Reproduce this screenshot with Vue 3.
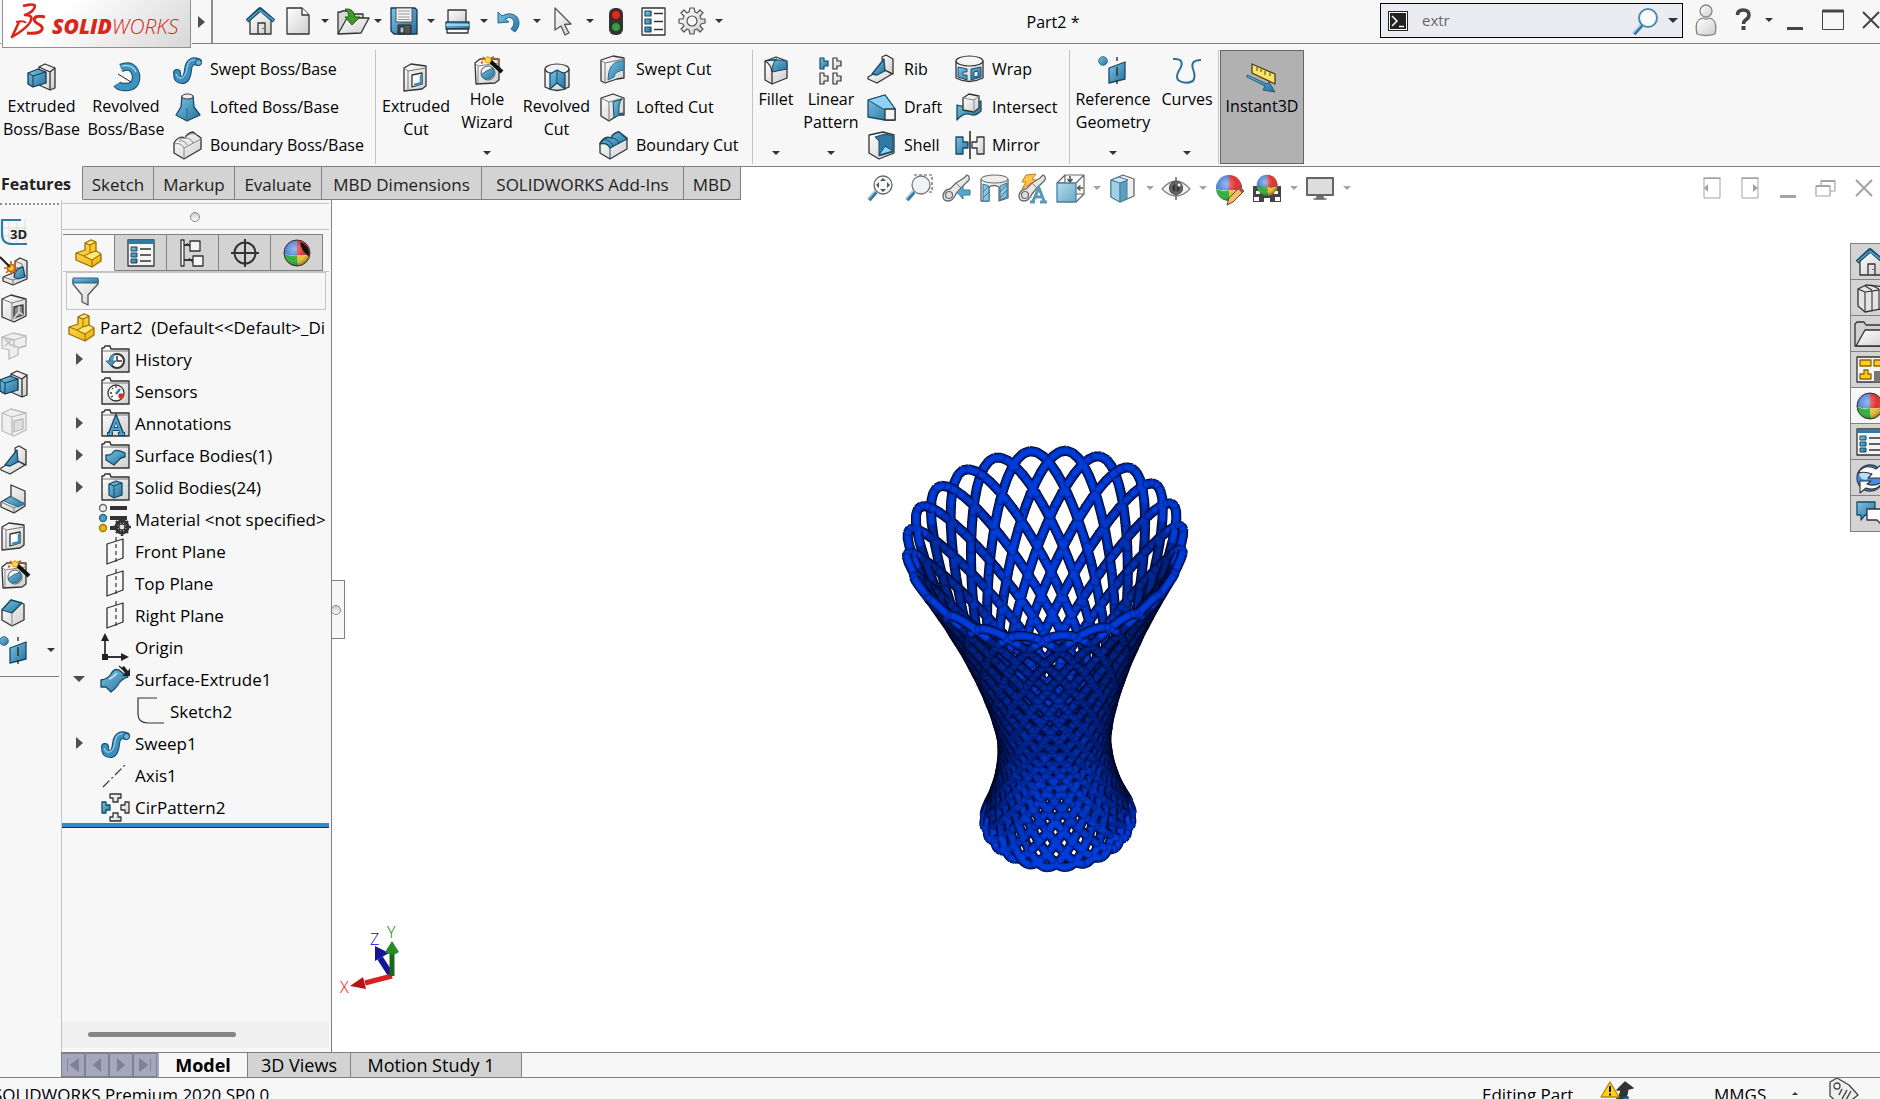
<script setup>
import { ref } from 'vue'

const K = '#333'
const B = 'url(#g-blue)'
const G = 'url(#g-grey)'
const Y = 'url(#g-gold)'
const p = (d, f = 'none', s = K, w = 1.3) =>
  `<path d="${d}" fill="${f}" stroke="${s}" stroke-width="${w}" stroke-linejoin="round"/>`
const c = (x, y, r, f = 'none', s = K, w = 1.3) =>
  `<circle cx="${x}" cy="${y}" r="${r}" fill="${f}" stroke="${s}" stroke-width="${w}"/>`

const ball =
  '<path d="M14 14L14 1A13 13 0 0 0 1 15Q8 17 14 16Z" fill="#4a7fd6"/>' +
  '<path d="M14 1A13 13 0 0 1 27 15Q20 17 14 16Z" fill="#dc3030"/>' +
  '<path d="M1 15Q8 18 14 16L15 27A13 13 0 0 1 1 15Z" fill="#2fae3a"/>' +
  '<path d="M27 15Q20 18 14 16L15 27A13 13 0 0 0 27 15Z" fill="#e9bf2c"/>' +
  '<circle cx="14" cy="14" r="13" fill="url(#g-shine)"/>'
const folder = p('M1 27V3H3L4 1H9L10 4H28V27Z', G, K, 1.4) + p('M1 6H28', 'none', '#777', 1)
const slab = p('M11 4L17 1L27 5V25L22 27L11 22Z', G) + p('M11 4L22 9L27 5M22 9V27')
const bluebox = p('M0 10L10 6L18 9V20L5 24L0 21Z', B, '#0d3b56') + p('M0 10L5 13L18 9M5 13V24', 'none', '#0d3b56', 1)
const wizardBox =
  p('M2 7L7 3H26V24L22 27L3 28Z', G) + p('M2 7L5 10L26 7M5 10V27', 'none', '#888', 1) +
  c(15, 17, 7, '#f4f4f4', '#555', 1) + p('M8 19Q12 15 20 12Q23 18 18 22Q11 25 8 19Z', B, '#2b6f95', 1) +
  p('M17 5L29 16', 'none', '#111', 4) + p('M9 4L11 1M14 6L12 3M14 1L17 3L21 1M24 3L26 5M10 6L8 7', 'none', '#c8641a', 2) +
  c(15, 4, 3, '#ffd83a', '#e8a21a', 1)
const sweep =
  '<path d="M4 18Q4 25 9 25Q14 25 15 15Q16 4 25 7" fill="none" stroke="#164a68" stroke-width="8" stroke-linecap="round"/>' +
  '<path d="M4 18Q4 25 9 25Q14 25 15 15Q16 4 25 7" fill="none" stroke="#3a8fbd" stroke-width="6" stroke-linecap="round"/>' +
  '<path d="M3 19Q5 24 8 23Q13 22 14 13Q15 4 22 5" fill="none" stroke="#85c4e4" stroke-width="1.5"/>' +
  c(25.5, 7.5, 3, '#6ab5da', '#164a68', 1)
const rib = p('M1 22L8 18L18 15L25 19L10 28L1 24Z', G) + p('M15 2L19 0L26 4V19L16 14Z', G) + p('M5 19L17 4L18 16L10 20Z', B, '#164a68')
const plane = p('M6 7L22 2V21L6 27Z', 'none') + p('M15 0V28', 'none', K, 1.2).replace('/>', ' stroke-dasharray="4 3"/>')
const refgeo = c(4, 5, 4.3, B, '#2b6f95', 1) + p('M10 12L26 6V23L10 27Z', B, '#164a68') + p('M18 1V5M18 11V20M18 24V28', 'none', '#222', 1.3)
const cutbox = p('M2 5L9 1L24 3V23L20 26L2 28Z', G) + p('M2 5L6 8L24 5M6 8V28', 'none', '#777', 1) + p('M10 12L20 10V21L10 24Z', '#fff', K) + p('M12 22L19 20V12', 'none', '#3a8fbd', 2.5)
const chamfer = p('M2 12L11 2L24 6V22L12 28L2 22Z', G) + p('M2 12L11 2L22 5L12 15Z', B, '#164a68') + p('M12 15V28', 'none', '#888', 1)
const partIcon =
  p('M1 14L10 11V4L16 1L21 3V12L26 15V22L17 28L1 21Z', Y, '#9a6c00') +
  p('M1 14L9 17L17 21L26 15M17 21V28M10 4L15 6L21 3M15 6V14L21 12', 'none', '#9a6c00', 1) +
  p('M10 4L16 1L21 3L15 6ZM9 17L15 14L21 12L26 15L17 21Z', '#ffe77a', '#9a6c00', 1)
const tee = (x, y, f, m = 1) => `<g transform="translate(${x} ${y}) scale(${m} 1)">` + p('M0 0H4V3H8V8H4V11H0Z', f, f === B ? '#164a68' : K, 1.2) + '</g>'
const lensHandle = p('M3 26L10 18', 'none', '#33789e', 4) + p('M2 25L9 17', 'none', '#9ccbe3', 1.5)
const scope = p('M1 22Q2 15 8 15L14 9L22 4L25 1Q28 2 27 6L19 14L14 20Q11 27 6 27Q1 27 1 22Z', G, '#666') + c(7, 21, 3.5, '#ddd', '#666', 1.2) + p('M14 9L19 14', 'none', '#777', 1)
const houseShape = p('M4 13V27H25V13L14.500 4Z', G) + p('M1 14L14 2L28 14', 'none', '#164a68', 4) + p('M1.500 13.500L14 3L27.500 13.500', 'none', '#4f9fc9', 1.6) + p('M12 27V16H19V27M17 21V22', 'none')
const propIcon = p('M1 1H27V27H1Z', '#f5f5f5') + '<rect x="1" y="1" width="26" height="4" fill="#2f7ba3"/>' + p('M4 8H10V12H4ZM4 14H10V18H4ZM4 20H10V24H4Z', B, '#164a68', 1) + p('M13 10H24M13 16H24M13 22H24', 'none')

const icons = {
  home: houseShape,
  newdoc: p('M3 1H18L25 8V27H3Z', G) + p('M18 1V8H25', '#fff'),
  open: p('M1 27V5H4L5 4H12L14 7H26V12', '#d7d7d7') + p('M1 27L10 11H32L24 26Z', G) + p('M8 2Q17 1 18 10H23L15 18L8 10H12Q12 5 8 2Z', '#3f9b23', '#1d5c0d', 1),
  save: p('M1 1H25L27 3V27H4L1 24Z', B, '#123a50') + p('M6 1H22V15H6Z', '#f4f4f4', '#555', 1) + p('M8 4H20M8 7H20M8 10H20M8 12.500H20', 'none', '#999', 1) + p('M8 18H21V27H8Z', '#555', '#222', 1) + p('M10 20H14V26H10Z', '#9ccbe3', '#222', 1),
  print: p('M5 3H23V16H5Z', G) + p('M3 15H26V22H3Z', B, '#164a68') + p('M3 18H26', 'none', '#b5e0f2', 1.5) + p('M4 22H25V26H4Z', '#fff'),
  undo: p('M2 5L2 16L13 15L9 12Q16 8 18 15Q18 19 15 22L19 25Q26 17 21 10Q15 4 6 9Z', B, '#24688d', 1),
  cursor: p('M6 1L22 17L15.500 17.500L20 26L16 28L12 19L6 23Z', G, '#555'),
  traffic: '<rect x="7" y="1" width="14" height="27" rx="6" fill="#333"/>' + c(14, 8, 4.5, '#d92b1e', '#7a0d06', 1) + c(14, 20, 4.5, '#3f9a45', '#11461a', 1),
  options: p('M2 1H25V28H2Z', '#fff') + p('M5 4H11V9H5ZM5 12H11V17H5ZM5 20H11V25H5Z', B, '#164a68', 1.2) + p('M14 6.500H23M14 14.500H23M14 22.500H23', 'none'),
  gear: p('M12 1H16L17 5L19 6L22 3L25 6L22 9L23 12L27 12V16L23 17L22 19L25 22L22 25L19 22L16.500 23L16 27H12L11 23L9 22L6 25L3 22L6 19L5 17L1 16V12L5 12L6 9L3 6L6 3L9 6L11 5Z', G, '#555', 1.2) + c(14, 14, 5, '#f7f7f7', '#555', 1.2),
  user: c(14, 5, 6, G, '#888') + p('M5 28Q2 15 10 12Q14 14 18 12Q26 15 23 28Q14 31 5 28Z', G, '#888'),
  help: '<path d="M8.500 9Q8.500 4 14 4Q20 4 20 9Q20 12 16.500 14Q14.500 15.500 14.500 18" fill="none" stroke="#444" stroke-width="3.500"/><rect x="12.500" y="20" width="4" height="4" fill="#444"/>',
  min: '<rect x="6" y="21" width="16" height="3" fill="#444"/>',
  max: p('M3.500 4H24.500V23.500H3.500Z', 'none', '#444', 1) + '<rect x="3" y="4" width="22" height="2.500" fill="#444"/>',
  close: p('M6 6L22 22M22 6L6 22', 'none', '#444', 2),
  extrude: slab + bluebox,
  revolve: '<path d="M9 5Q21 0 24 12Q25 25 12 24Q7 24 5 21" fill="none" stroke="#164a68" stroke-width="8.500"/><path d="M9 5Q21 0 24 12Q25 25 12 24Q7 24 5 21" fill="none" stroke="#3f93c0" stroke-width="6.500"/><path d="M10 3Q20 1 24 9" fill="none" stroke="#9ed3ec" stroke-width="1.500"/>' + p('M6 11L19 19', 'none', '#222', 1),
  sweep,
  loft: p('M9 3H20L21 14L27 22L14 28L3 22L8 14Z', B, '#164a68') + p('M14 15V28', 'none', '#2b6f95', 1) + '<ellipse cx="14.500" cy="3.500" rx="5.500" ry="2.500" fill="#eee" stroke="#333"/>',
  boundary: p('M1 12Q6 4 12 7Q14 2 20 1L28 7V18L11 28L1 22Z', G) + p('M1 13Q8 11 11 17L28 8M11 17V28M6 10Q12 9 14 14M12 7Q18 7 20 12M4 8Q10 9 14 5T24 4', 'none', '#888', 1),
  cut: cutbox,
  wizard: wizardBox,
  revcut: p('M2 6V24Q14 31 26 24V6', G) + '<ellipse cx="14" cy="6" rx="12" ry="5" fill="#f2f2f2" stroke="#333" stroke-width="1.200"/>' + p('M14 7L7 11V26L14 20L22 26V11Z', B, '#164a68') + p('M14 7V20', 'none', '#164a68', 1),
  sweptcut: p('M2 5L14 1L25 3V23L18 24L6 28L2 26Z', G) + p('M2 5L6 8L25 4M6 8V28', 'none', '#777', 1) + p('M21 6Q9 8 9 25L15 22Q16 16 25 15V6Z', B, '#2b6f95', 1),
  loftcut: p('M2 5L14 1L25 5V22L19 22L10 28L2 23Z', G) + p('M2 5L10 9L25 5M10 9V28', 'none', '#777', 1) + p('M14 9L23 6Q19 10 20 21L24 20L15 25Z', B, '#164a68', 1),
  boundcut: p('M1 12Q6 4 12 7Q14 2 20 1L28 7V18L11 28L1 22Z', G) + p('M1 13Q6 5 12 7Q14 2 20 1L28 8L11 17Q8 11 1 13Z', B, '#164a68') + p('M6 9Q12 9 14 15M12 7Q18 7 20 12M11 17V28', 'none', '#164a68', 1),
  fillet: p('M3 5L14 1L25 5V22L10 28L3 24Z', G) + p('M3 5L15 3Q10 6 10 16L25 13V8Q24 4 17 4Z', B, '#164a68', 1) + p('M3 5Q9 8 10 16V28', 'none'),
  linear: tee(3, 2, B) + tee(16, 2, G) + tee(3, 17, G) + tee(16, 17, G),
  rib,
  draft: p('M1 7L18 2L28 16V27H18L1 24Z', B, '#164a68') + p('M1 7L18 2L28 16L18 17Z', '#8bd2f5', '#164a68', 1) + p('M18 16H28V27H18Z', '#f4f4f4'),
  shell: p('M2 4L16 1L27 4V22L12 28L2 22Z', G) + p('M8 6L18 3L26 5V21L12 25V10Z', '#2f7ba3', '#164a68', 1) + p('M12 24L18 15L26 20Z', '#8bd2f5', '#164a68', 1),
  wrap: p('M1 6V23Q14 30 28 23V6', G) + '<ellipse cx="14.500" cy="6" rx="13.500" ry="5" fill="#f4f4f4" stroke="#333" stroke-width="1.200"/>' + p('M3 12L12 14V17H8V20H12V25L3 22ZM16 14L26 12V22L16 25Z', B, '#164a68', 1) + p('M19 17L23 16V21L19 22Z', '#fff', '#164a68', 1),
  intersect: p('M2 12Q10 15 14 10Q20 12 26 8V18Q20 24 14 21Q8 20 2 27Z', B, '#164a68') + p('M8 5L14 1L24 3V15L19 19L8 17Z', G) + p('M8 5L19 7L24 3M19 7V19', 'none', '#888', 1),
  mirror: '<g transform="translate(0 -1)">' + p('M1 7H8V12H13V18H8V24H1Z', B, '#164a68') + p('M29 7H22V12H17V18H22V24H29Z', G) + p('M15 1V29', 'none', '#222', 1.5) + '</g>',
  refgeo,
  curves: p('M0 3Q11 2 8 11Q2 20 5 24Q12 29 20 25Q23 21 20 13Q17 4 28 4', 'none', '#2b6f95', 2),
  instant: p('M4 1L27 11V21L4 10Z', '#fbe36a', '#4b4213') + p('M9 4V8M13 6V9M17 8V12M22 10V13', 'none', '#4b4213', 1) + p('M-1 14L17 23L15 27L27 29L21 19L19 21L-1 12Z', B, '#1f5b7c', 1),
  zoomfit: lensHandle + c(17, 11, 9, '#f6f8f9', '#666') + '<path d="M17 4L20 7H14ZM17 18L20 15H14ZM10 11L13 8V14ZM24 11L21 8V14Z" fill="#555"/>',
  zoomarea: p('M10 1H28V18H24', 'none', '#555', 1.2).replace('/>', ' stroke-dasharray="3 2"/>') + lensHandle + c(17, 11, 9, '#eef3f5', '#777'),
  prev: scope + p('M15 18L21 12V16H28V21H21V25Z', '#5ba5cb', '#33789e', 1),
  section: p('M1 5V27H9V13Q14 10 19 13V27L28 24V5', G, '#666') + '<ellipse cx="14.500" cy="5" rx="13.500" ry="4" fill="#eee" stroke="#666"/>' + p('M3 10L9 12V27H3ZM20 12L27 9V23L20 26Z', '#8cc3df', '#33789e', 1) + p('M3 18L9 12M3 24L9 18M20 18L27 10M20 24L27 16', 'none', '#33789e', 1),
  dynview: scope + p('M8 1L18 0L14 5L18 6L4 15L8 8L4 8Z', '#ffc54a', '#c97b12', 1) + '<path d="M12 28H17M22 28H29M15 27L21 14L26 27M17 23H24" stroke="#5b99b9" stroke-width="3" fill="none"/>',
  orient: p('M1 9L9 1H28V20L20 28M9 1V9M9 9L1 9M28 1L20 9M9 20H28M9 20L3 26', 'none', '#666', 1.2) + p('M1 9H20V28H1Z', 'url(#g-soft)', '#447f9e') + p('M14 2V7M11.500 5L14 8L16.500 5M27 14H22M24.500 11.500L21.500 14L24.500 16.500', 'none', '#555', 1.6),
  display: p('M2 6L14 1L25 5V22L11 28L2 23Z', '#eee', '#666') + p('M2 6L11 9V28L2 23Z', '#9fd0e8', '#447f9e', 1) + p('M2 6L10 3L19 6L11 9Z', '#c4e5f4', '#447f9e', 1) + p('M11 9L18 7V25L11 28Z', '#5d9fc0', '#447f9e', 1),
  eye: p('M0 15Q14 -1 28 15Q14 29 0 15Z', '#f4f4f4', '#888') + c(14, 14, 6.5, '#666', '#555') + c(14, 14, 3, '#333') + c(17, 11, 1.5, '#fff', '#fff', 0) + p('M14 3V26', 'none', '#666', 1.5),
  appear: ball + p('M12 31L14 24L25 13L29 17L18 28Z', '#f0c064', '#5a4320', 1) + p('M24 14L28 18', 'none', '#b9475a', 3),
  scene: '<path d="M0 12H28V28H0Z" fill="#444"/><path d="M3 17H7V20H3ZM21 17H25V20H21ZM1 23H6V27H1ZM11 24H17V28H11ZM22 23H27V27H22Z" fill="#fff"/><g transform="translate(3 0) scale(.8)">' + ball + '</g>',
  monitor: p('M1 4H27V21H1Z', '#ddd', '#666', 2) + p('M11 22H17V25H20H8H11Z', '#777', '#666', 1.5),
  dleft: p('M6 4H22V24H6Z', 'none', '#a3a3a3', 1) + '<rect x="5.500" y="3.500" width="17" height="1.500" fill="#a3a3a3"/><path d="M10 10V18L6 14Z" fill="#a3a3a3"/>',
  dright: p('M6 4H22V24H6Z', 'none', '#a3a3a3', 1) + '<rect x="5.500" y="3.500" width="17" height="1.500" fill="#a3a3a3"/><path d="M17 10V18L22 14Z" fill="#a3a3a3"/>',
  dmin: '<rect x="6" y="21" width="16" height="3" fill="#a3a3a3"/>',
  drest: p('M4 12H18V22H4ZM9 12V7H23V17H18', 'none', '#a3a3a3', 1.2) + p('M4 12H18M9 7H23', 'none', '#a3a3a3', 2),
  dclose: p('M6 6L22 22M22 6L6 22', 'none', '#a3a3a3', 2),
  sk3d: p('M9 1V27M17 1V27M25 1V27M1 10H27M1 18H27', 'none', '#ddd', 1) + p('M21 2H2V16Q2 26 12 26H27', 'none', '#2f7ba3', 2.2) + '<text x="10" y="21" font-size="13" font-weight="700" fill="#222">3D</text>',
  instRib: p('M3 21L15 16V5L20 2L27 5V23L13 29L3 25Z', G) + p('M3 21L13 24L27 19M13 24V29M15 5L22 8V18', 'none', '#777', 1) + p('M14 21Q15 12 23 11L25 21L18 23Z', B, '#164a68') + p('M11 5V19M4 12H18M6 7L16 17M16 7L6 17', 'none', '#d0620e', 1.6) + c(11, 12, 3.5, '#ffc53a', '#d0620e', 1.5) + p('M0 1L10 11', 'none', '#222', 2),
  hollow: p('M2 5L11 1L26 5V22L14 28L2 23Z', G) + p('M2 5L12 9L26 5M12 9V28', 'none', '#777', 1) + p('M14 13L23 11V21L14 24Z', '#888', '#333') + p('M14 24L19 18V12M19 18L23 21', 'none', '#ddd', 1.5),
  ghostA: '<g opacity=".3">' + p('M2 5L13 1L26 4V14L18 16V23L9 27V18L2 16Z', '#ddd') + p('M2 5L14 8L26 4M14 8V16M9 12L18 15M5 7L12 14M12 7L5 14', 'none') + '</g>',
  ghostB: '<g opacity=".3">' + p('M2 5L11 1L26 5V22L14 28L2 23Z', '#ddd') + p('M2 5L12 9L26 5M12 9V28', 'none') + p('M14 13L23 11V21L14 24Z', '#aaa') + '</g>',
  bracket: p('M1 18L11 12V1L25 7V22L14 29L1 23Z', G) + p('M11 12L25 20M1 18L14 24V29M14 24L25 18', 'none', '#777', 1) + p('M4 17L10 13L25 20L18 23Z', B, '#2b6f95', 1),
  chamfer,
  part: partIcon,
  prop: propIcon,
  config: p('M2 1H5V27H2Z', '#fff') + p('M5 6H12M5 21H14', 'none', K, 2) + p('M11 2H21V12H11ZM14 17H24V27H14Z', '#f4f4f4') + p('M8 4L11 8M10 19L14 24', 'none', K, 1),
  target: c(14, 14, 10.5, 'none', K, 2) + p('M14 0V28M0 14H28', 'none', K, 2),
  ball: ball + c(14, 14, 13, 'none', '#333', 1),
  ballDark: ball + c(14, 14, 13, 'none', '#333', 1) + '<path d="M17 3Q27 6 26 17Q19 14 17 3Z" fill="#111"/>',
  filter: p('M2 3V7L11 18V25L17 28V18L27 7V3Z', G, '#555') + p('M2 1H27V6H2Z', B, '#24688d', 1),
  history: folder + c(16, 16, 7, '#fff', K, 2) + p('M16 11V16H21', 'none', K, 1.5) + p('M14 9Q8 11 9 16H5L10 21L15 16H12', B, '#2b6f95', 1),
  sensors: folder + c(15, 16, 8, '#fff', K) + p('M15 17L19 12', 'none', '#2f7ba3', 2.5) + p('M9 16H11M11 11L12 12M15 9V11M10 20L12 19', 'none') + c(20, 19, 2, '#d92b1e', '#d92b1e'),
  annot: folder + '<path d="M6 25H12M17 25H24M9 24L15 9L21 24M11 20H19" stroke="#164a68" stroke-width="4" fill="none"/><path d="M7 25H11M18 25H23M9.500 24L15 10L20.500 24M11 20H19" stroke="#55a3cb" stroke-width="2" fill="none"/>',
  surfb: folder + p('M5 14Q10 15 13 10Q17 8 24 12V16Q20 16 17 20L13 24L5 19Z', B, '#164a68'),
  solidb: folder + p('M8 11L15 8L21 10V22L13 25L8 22Z', B, '#164a68') + p('M8 11L13 13L21 10M13 13V25', 'none', '#164a68', 1),
  material: c(2, 3, 3.5, '#eee', '#666') + c(2, 13, 3.5, '#4f9fc9', '#24688d') + c(2, 23, 3.5, '#e9b800', '#9a7a00') + '<path d="M9 1H26V5H9ZM9 11H26V15H9ZM9 21H15V25H9Z" fill="#333"/>' + c(21, 22, 6, '#ddd', '#333', 3) + p('M21 13V31M12 22H30M15 16L27 28M27 16L15 28', 'none', '#333', 2.4) + c(21, 22, 3, '#ddd', '#333', 1),
  plane,
  origin: '<path d="M4 24V6M4 24H22" stroke="#333" stroke-width="1.800"/><path d="M4 0L8 8H0ZM28 24L20 20V28ZM1 21H7V27H1Z" fill="#222"/>',
  surfext: p('M0 15Q7 14 10 9Q13 3 18 5L27 12Q20 14 17 20Q15 23 10 27L5 22L0 22Z', B, '#164a68') + p('M8 14Q13 12 16 8', 'none', '#b5e0f2', 2) + p('M18 1L27 9', 'none', '#222', 1.2) + '<path d="M29 11H21L24 8L20 3L23 1L27 6L29 3Z" fill="#222"/>',
  sketch: p('M20 1H1V17Q1 26 11 26H27', 'none', '#333', 1.2),
  axis: p('M2 26L26 2', 'none', '#333', 1.2).replace('/>', ' stroke-dasharray="9 3 2 3"/>'),
  cirpat: p('M9 1H20V5H17V9H12V5H9Z', G) + p('M9 28H20V24H17V20H12V24H9Z', G) + p('M1 9V20H5V17H9V12H5V9Z', B, '#164a68') + p('M28 9V20H24V17H20V12H24V9Z', G),
  books: p('M2 5L10 1L30 3V24L9 28L2 22Z', '#e4e4e4') + p('M2 5L9 8L30 5M9 8V28M16 7V27M23 6V26M9 2L16 6M15 1L23 5', 'none', K, 1.1),
  folderOpen: p('M-1 26V4L1 2H8L10 5H30V26Z', '#cfcfcf') + p('M0 26L9 10H34L26 26Z', G),
  palette: p('M1 1H31V26H1Z', '#f6f6f6') + p('M4 4H15V10H4ZM18 4H29V10H18Z', '#ffcc1a', '#8a6500') + p('M4 23V18H8V14H12V18H15V23Z', '#ffcc1a', '#8a6500') + '<path d="M18 15H31V26H18Z" fill="#777"/>',
  refresh: c(14, 14, 13, '#3f8fe0', '#345') + c(9, 10, 5, '#b9defa', '#b9defa') + p('M2 9Q9 -1 20 5L25 1V14H12L16 10Q9 7 2 9Z', '#fff', K, 1.1) + p('M27 18Q20 28 10 24L4 29V17H15L11 20Q18 23 27 18Z', '#fff', K, 1.1),
  chat: p('M1 2H19V15H9L5 20V15H1Z', B, '#164a68') + p('M11 9H30V20H26V25L21 20H11Z', '#fff'),
  rebuild: p('M6 21Q18 20 20 8L16 8L24 0L32 6L27 7Q26 21 12 27Z', '#333') + p('M22 15H27V28H20Z', '#2f7ba3', '#164a68') + p('M0 15L9 0L18 15Z', '#ffd21a', '#b58900') + p('M9 4V10M9 11.500V13.500', 'none', '#111', 2),
  tag: p('M1 0V14L14 25L29 13L20 3L8 -4Z', '#eee', '#444') + c(8, 4, 3, '#fff', '#444') + p('M13 7L10 13M18 8L13 17M22 9L17 18', 'none', '#444', 1.4),
}

const quick = [
  ['home', 'Welcome', false], ['newdoc', 'New', true], ['open', 'Open', true], ['save', 'Save', true],
  ['print', 'Print', true], ['undo', 'Undo', true], ['cursor', 'Select', true],
  ['traffic', 'Rebuild', false], ['options', 'File Properties', false], ['gear', 'Options', true],
]
const hud = [
  ['zoomfit', 'Zoom to Fit', false], ['zoomarea', 'Zoom to Area', false], ['prev', 'Previous View', false],
  ['section', 'Section View', false], ['dynview', 'Dynamic Annotation Views', false], ['orient', 'View Orientation', true],
  ['display', 'Display Style', true], ['eye', 'Hide/Show Items', true], ['appear', 'Edit Appearance', false],
  ['scene', 'Apply Scene', true], ['monitor', 'View Settings', true],
]
const docControls = [['dleft', 'Previous pane'], ['dright', 'Next pane'], ['dmin', 'Minimize document'], ['drest', 'Restore document'], ['dclose', 'Close document']]
const ribbon = [
  { cls: 'g-boss', cells: [
    { icon: 'extrude', label: 'Extruded\nBoss/Base' },
    { icon: 'revolve', label: 'Revolved\nBoss/Base' },
    { list: [['sweep', 'Swept Boss/Base'], ['loft', 'Lofted Boss/Base'], ['boundary', 'Boundary Boss/Base']] },
  ] },
  { cls: 'g-cut', cells: [
    { icon: 'cut', label: 'Extruded\nCut' },
    { icon: 'wizard', label: 'Hole\nWizard', drop: true },
    { icon: 'revcut', label: 'Revolved\nCut' },
    { list: [['sweptcut', 'Swept Cut'], ['loftcut', 'Lofted Cut'], ['boundcut', 'Boundary Cut']] },
  ] },
  { cls: 'g-feat', cells: [
    { icon: 'fillet', label: 'Fillet', drop: true },
    { icon: 'linear', label: 'Linear\nPattern', drop: true },
    { list: [['rib', 'Rib'], ['draft', 'Draft'], ['shell', 'Shell']] },
    { list: [['wrap', 'Wrap'], ['intersect', 'Intersect'], ['mirror', 'Mirror']] },
  ] },
  { cls: 'g-ref', cells: [
    { icon: 'refgeo', label: 'Reference\nGeometry', drop: true },
    { icon: 'curves', label: 'Curves', drop: true },
  ] },
]
const cmdTabs = [['Features', 't-feat'], ['Sketch', 't-sketch'], ['Markup', 't-markup'], ['Evaluate', 't-eval'], ['MBD Dimensions', 't-dim'], ['SOLIDWORKS Add-Ins', 't-add'], ['MBD', 't-mbd']]
const rail = [['sk3d', '3D Sketch'], ['instRib', 'Live Section'], ['hollow', 'Hollow'], ['ghostA', 'Combine'], ['extrude', 'Extruded Boss'], ['ghostB', 'Cavity'], ['rib', 'Rib'], ['bracket', 'Bracket'], ['cut', 'Extruded Cut'], ['wizard', 'Hole Wizard'], ['chamfer', 'Chamfer'], ['refgeo', 'Reference Geometry']]
const panelTabs = [['part', 'FeatureManager'], ['prop', 'PropertyManager'], ['config', 'ConfigurationManager'], ['target', 'DimXpertManager'], ['ballDark', 'DisplayManager']]
const tree = [
  { icon: 'history', label: 'History', exp: 'closed' },
  { icon: 'sensors', label: 'Sensors' },
  { icon: 'annot', label: 'Annotations', exp: 'closed' },
  { icon: 'surfb', label: 'Surface Bodies(1)', exp: 'closed' },
  { icon: 'solidb', label: 'Solid Bodies(24)', exp: 'closed' },
  { icon: 'material', label: 'Material <not specified>' },
  { icon: 'plane', label: 'Front Plane' },
  { icon: 'plane', label: 'Top Plane' },
  { icon: 'plane', label: 'Right Plane' },
  { icon: 'origin', label: 'Origin' },
  { icon: 'surfext', label: 'Surface-Extrude1', exp: 'open' },
  { icon: 'sketch', label: 'Sketch2', child: true },
  { icon: 'sweep', label: 'Sweep1', exp: 'closed' },
  { icon: 'axis', label: 'Axis1' },
  { icon: 'cirpat', label: 'CirPattern2' },
]
const taskPane = [['home', 'Resources'], ['books', 'Design Library'], ['folderOpen', 'File Explorer'], ['palette', 'View Palette'], ['ball', 'Appearances'], ['prop', 'Custom Properties'], ['refresh', 'Recovery'], ['chat', 'Forum']]
const pager = [['M6 5V19M18 5V19L9 12Z', 'First'], ['M16 5V19L8 12Z', 'Previous'], ['M8 5V19L16 12Z', 'Next'], ['M18 5V19M6 5V19L15 12Z', 'Last']]

const query = ref('extr')

/* Vase: 24 copies of one tube loop. Each loop is the cut of a slanted plane
   through a waisted body of revolution, patterned round the axis. */
const TAU = Math.PI * 2
const waist = 0.28
const radius = z => z > waist
  ? 52 + 87 * ((z - waist) / (1 - waist)) ** 1.45
  : 52 + 22 * ((waist - z) / waist) ** 2
const slope = z => (radius(z + 0.005) - radius(z - 0.005)) / 0.01 / 370
const SIN = 0.67
const COS = 0.742
const heightAt = a => {
  let lo = 0
  let hi = 1
  for (let i = 0; i < 30; i++) {
    const m = (lo + hi) / 2
    if (m - (74 + radius(m) * Math.cos(a)) / 213 > 0) hi = m
    else lo = m
  }
  return (lo + hi) / 2
}
function buildVase() {
  const steps = 132
  const roll = 0.047
  const bins = new Map()
  const profile = Array.from({ length: steps + 1 }, (_, i) => {
    const a = (i / steps) * TAU
    return { a, z: heightAt(a) }
  })
  const project = (a, z) => {
    const r = radius(z)
    const x = r * Math.sin(a)
    const f = r * Math.cos(a)
    const y = -275 * z + SIN * f
    return {
      x: 178 + x * Math.cos(roll) + y * Math.sin(roll),
      y: 388 - x * Math.sin(roll) + y * Math.cos(roll),
      d: f * COS + z * 370 * SIN,
    }
  }
  for (let k = 0; k < 24; k++) {
    const off = ((k + 0.3) / 24) * TAU
    for (let i = 0; i < steps; i++) {
      const s = profile[i]
      const e = profile[i + 1]
      const q = project(s.a + off, s.z)
      const w = project(e.a + off, e.z)
      const len = Math.hypot(w.x - q.x, w.y - q.y) || 1
      const ux = ((w.x - q.x) / len) * 0.6
      const uy = ((w.y - q.y) / len) * 0.6
      const z = (s.z + e.z) / 2
      const g = slope(z)
      const facing = Math.abs(Math.cos((s.a + e.a) / 2 + off) * COS - g * SIN) / Math.hypot(1, g)
      let level = Math.round(Math.min(1, 0.12 + facing * 0.95) * 8)
      if (z > 0.95 || z < 0.03) level = 8
      const key = Math.round((q.d + w.d) / 2 / 5)
      if (!bins.has(key)) bins.set(key, { key, all: '', tones: {} })
      const bin = bins.get(key)
      const d = `M${(q.x - ux).toFixed(1)} ${(q.y - uy).toFixed(1)}L${(w.x + ux).toFixed(1)} ${(w.y + uy).toFixed(1)}`
      bin.all += d
      bin.tones[level] = (bin.tones[level] || '') + d
    }
  }
  return [...bins.values()].sort((m, n) => m.key - n.key).map(b => ({
    key: b.key,
    all: b.all,
    tones: Object.entries(b.tones).map(([l, d]) => {
      const t = l / 8
      return {
        l,
        d,
        edge: `rgb(0,${Math.round(8 + 32 * t)},${Math.round(40 + 125 * t)})`,
        core: `rgb(0,${Math.round(16 + 44 * t)},${Math.round(70 + 145 * t)})`,
      }
    }),
  }))
}
const vase = buildVase()
</script>

<template>
  <div class="app">
    <svg class="defs" aria-hidden="true">
      <defs>
        <linearGradient id="g-blue" x1="0" y1="0" x2="1" y2="1"><stop offset="0" stop-color="#7cc4e6" /><stop offset="1" stop-color="#26719a" /></linearGradient>
        <linearGradient id="g-soft" x1="0" y1="0" x2="1" y2="1"><stop offset="0" stop-color="#b4def0" /><stop offset="1" stop-color="#6ba8c7" /></linearGradient>
        <linearGradient id="g-grey" x1="0" y1="0" x2="1" y2="1"><stop offset="0" stop-color="#ffffff" /><stop offset="1" stop-color="#cfcfcf" /></linearGradient>
        <linearGradient id="g-gold" x1="0" y1="0" x2="1" y2="1"><stop offset="0" stop-color="#ffdf5a" /><stop offset="1" stop-color="#eeb30c" /></linearGradient>
        <radialGradient id="g-shine" cx=".4" cy=".35" r=".65"><stop offset="0" stop-color="#fff" stop-opacity=".45" /><stop offset=".6" stop-color="#fff" stop-opacity="0" /><stop offset="1" stop-color="#000" stop-opacity=".35" /></radialGradient>
      </defs>
    </svg>

    <header class="titlebar">
      <div class="brand">
        <svg class="brand-mark" viewBox="0 0 36 36" aria-hidden="true">
          <g fill="none" stroke="#d9261c" stroke-linejoin="round">
            <path d="M13 3Q24 0 25 3Q24 9 15 12Q23 12 21 17Q19 24 2 34L9 19" stroke-width="2.600" />
            <path d="M6 19Q14 17 16 20" stroke-width="2" />
            <path d="M35 14Q26 12 24 16Q24 19 30 22Q34 25 31 28Q27 31 17 30" stroke-width="3" />
          </g>
        </svg>
        <span class="brand-name"><b>SOLID</b><span>WORKS</span></span>
      </div>
      <button class="flyout" aria-label="Show menu"><i class="tri-right"></i></button>
      <nav class="iconbar quick" aria-label="Quick access">
        <template v-for="q in quick" :key="q[0]">
          <button class="ib" :aria-label="q[1]"><svg class="ic" viewBox="0 0 28 28" v-html="icons[q[0]]"></svg></button>
          <button v-if="q[2]" class="cb" :aria-label="q[1] + ' menu'"><i class="caret"></i></button>
        </template>
      </nav>
      <h1 class="doc">Part2 *</h1>
      <label class="search">
        <svg class="prompt" viewBox="0 0 20 20" aria-hidden="true"><rect x=".5" y=".5" width="19" height="19" fill="#222" stroke="#222" /><rect x="1.500" y="1.500" width="17" height="17" fill="none" stroke="#fff" /><path d="M4 5L9 10L4 15M11 15.500H16" fill="none" stroke="#fff" stroke-width="1.500" /></svg>
        <input v-model="query" type="text" aria-label="Search commands" />
        <svg class="ic" viewBox="0 0 28 28" aria-hidden="true"><path d="M1 27L9 18" stroke="#33789e" stroke-width="4" /><path d="M0 26L8 17" stroke="#b5dcef" stroke-width="1.500" /><circle cx="15" cy="11" r="9" fill="#fbfcfe" stroke="#4b8cb3" stroke-width="2" /></svg>
        <i class="caret big"></i>
      </label>
      <div class="winctl">
        <button class="ib" aria-label="Account"><svg class="ic" viewBox="0 0 28 28" v-html="icons.user"></svg></button>
        <button class="ib help" aria-label="Help"><svg class="ic" viewBox="0 0 28 28" v-html="icons.help"></svg></button>
        <button class="cb" aria-label="Help menu"><i class="caret"></i></button>
        <button class="ib" aria-label="Minimize"><svg class="ic" viewBox="0 0 28 28" v-html="icons.min"></svg></button>
        <button class="ib" aria-label="Maximize"><svg class="ic" viewBox="0 0 28 28" v-html="icons.max"></svg></button>
        <button class="ib" aria-label="Close"><svg class="ic" viewBox="0 0 28 28" v-html="icons.close"></svg></button>
      </div>
    </header>

    <section class="ribbon" aria-label="Features toolbar">
      <div v-for="g in ribbon" :key="g.cls" class="group" :class="g.cls">
        <template v-for="(cell, i) in g.cells" :key="i">
          <div v-if="cell.list" class="list">
            <button v-for="l in cell.list" :key="l[1]" class="row-btn">
              <svg class="ic" viewBox="0 0 28 28" v-html="icons[l[0]]"></svg><span>{{ l[1] }}</span>
            </button>
          </div>
          <button v-else class="big-btn" :class="{ drop: cell.drop }">
            <svg class="ic" viewBox="0 0 28 28" v-html="icons[cell.icon]"></svg>
            <span>{{ cell.label }}</span>
            <i v-if="cell.drop" class="caret"></i>
          </button>
        </template>
      </div>
      <button class="big-btn instant" aria-pressed="true">
        <svg class="ic" viewBox="0 0 28 28" v-html="icons.instant"></svg>
        <span>Instant3D</span>
      </button>
    </section>

    <div class="tabrow">
      <div class="cmdtabs" role="tablist">
        <button v-for="(t, i) in cmdTabs" :key="t[0]" role="tab" :class="[t[1], { on: i === 0 }]" :aria-selected="i === 0">{{ t[0] }}</button>
      </div>
      <div class="hudrow">
        <nav class="iconbar hud" aria-label="View toolbar">
          <template v-for="q in hud" :key="q[0]">
            <button class="ib" :aria-label="q[1]"><svg class="ic" viewBox="0 0 28 28" v-html="icons[q[0]]"></svg></button>
            <button v-if="q[2]" class="cb soft" :aria-label="q[1] + ' menu'"><i class="caret"></i></button>
          </template>
        </nav>
        <nav class="iconbar docctl" aria-label="Document window">
          <button v-for="q in docControls" :key="q[0]" class="ib" :aria-label="q[1]"><svg class="ic" viewBox="0 0 28 28" v-html="icons[q[0]]"></svg></button>
        </nav>
      </div>
    </div>

    <main class="body">
      <nav class="rail" aria-label="Shortcut toolbar">
        <div class="rail-in">
          <div v-for="(r, i) in rail" :key="i" class="rail-row">
            <button class="rb" :aria-label="r[1]"><svg class="ic" viewBox="0 0 28 28" v-html="icons[r[0]]"></svg></button>
            <i v-if="i === rail.length - 1" class="caret"></i>
          </div>
        </div>
      </nav>

      <div class="work">
        <div class="upper">
          <aside class="panel">
            <div class="grip"><i class="knob"></i></div>
            <div class="ptabs" role="tablist">
              <button v-for="(t, i) in panelTabs" :key="t[0]" role="tab" :aria-label="t[1]" :class="{ on: i === 0 }"><svg class="ic" viewBox="0 0 28 28" v-html="icons[t[0]]"></svg></button>
            </div>
            <div class="filter"><svg class="ic" viewBox="0 0 28 28" v-html="icons.filter"></svg></div>
            <ul class="tree">
              <li class="root"><svg class="ic" viewBox="0 0 28 28" v-html="icons.part"></svg><span>Part2&nbsp; (Default&lt;&lt;Default&gt;_Di</span></li>
              <li v-for="n in tree" :key="n.label" :class="{ child: n.child }">
                <span class="exp"><i v-if="n.exp" :class="n.exp === 'open' ? 'tri-down' : 'tri-right'"></i></span>
                <svg class="ic" viewBox="0 0 28 28" v-html="icons[n.icon]"></svg><span>{{ n.label }}</span>
              </li>
            </ul>
            <div class="rollback"></div>
            <div class="hscroll"><i></i></div>
          </aside>

          <section class="viewport" aria-label="Model view">
            <div class="handle"><i class="knob"></i></div>
            <svg class="vase" viewBox="0 0 330 460" role="img" aria-label="Vase model">
              <g v-for="b in vase" :key="b.key" fill="none">
                <path :d="b.all" stroke="#00061e" stroke-width="10" />
                <path v-for="t in b.tones" :key="'e' + t.l" :d="t.d" :stroke="t.edge" stroke-width="8" stroke-linecap="round" />
                <path v-for="t in b.tones" :key="'c' + t.l" :d="t.d" :stroke="t.core" stroke-width="5" stroke-linecap="round" />
              </g>
            </svg>
            <svg class="triad" viewBox="0 0 64 72" role="img" aria-label="Axis triad">
              <path d="M54 49L43 32" stroke="#15159a" stroke-width="6" /><path d="M38 20L52 27L38 35Z" fill="#15159a" />
              <path d="M55 50L28 57" stroke="#d82020" stroke-width="5" /><path d="M13 60L26 51L29 63Z" fill="#b81414" />
              <path d="M55 50V27" stroke="#1a661a" stroke-width="5" /><path d="M55 15L62 26Q55 31 48 26Z" fill="#2a8a2a" />
              <text x="50" y="12" fill="#008000">Y</text><text x="33" y="19" fill="#0000ff">Z</text><text x="3" y="67" fill="#ff0000">X</text>
            </svg>
            <nav class="taskpane" aria-label="Task pane">
              <button v-for="(t, i) in taskPane" :key="t[0]" :aria-label="t[1]" :class="{ on: i === 4 }"><svg class="ic" viewBox="0 0 28 28" v-html="icons[t[0]]"></svg></button>
            </nav>
          </section>
        </div>

        <div class="sheets">
          <div class="pager">
            <button v-for="g in pager" :key="g[1]" :aria-label="g[1]"><svg viewBox="0 0 24 24"><path :d="g[0]" fill="#80809a" stroke="#80809a" /></svg></button>
          </div>
          <div class="sheet-tabs" role="tablist">
            <button class="on s-model" role="tab" aria-selected="true">Model</button>
            <button class="s-views" role="tab">3D Views</button>
            <button class="s-motion" role="tab">Motion Study 1</button>
          </div>
        </div>
      </div>
    </main>

    <footer class="status">
      <span class="product">SOLIDWORKS Premium 2020 SP0.0</span>
      <span class="mode">Editing Part</span>
      <svg class="ic rebuild" viewBox="0 0 32 28" v-html="icons.rebuild"></svg>
      <span class="units">MMGS</span>
      <i class="tri-up"></i>
      <svg class="ic" viewBox="0 0 28 28" v-html="icons.tag"></svg>
    </footer>
  </div>
</template>

<style>
body { background: #f7f7f7; overflow: hidden; }
</style>

<style scoped>
* { box-sizing: border-box; }
.app {
  display: flex; flex-direction: column; height: 100vh; overflow: hidden;
  font-family: "Open Sans", "Noto Sans", sans-serif; font-size: 16px; line-height: 23px;
  color: #000; background: #f7f7f7;
}
.defs { position: absolute; width: 0; height: 0; }
button { margin: 0; padding: 0; border: 0; background: none; font: inherit; color: inherit; white-space: nowrap; }
.ic { width: 28px; height: 28px; flex: none; overflow: visible; display: block; }

.caret { width: 0; height: 0; flex: none; border: 4px solid transparent; border-top-color: #333; border-bottom: 0; }
.caret.big { border-width: 5px 5px 0; }
.tri-right { width: 0; height: 0; border: 6px solid transparent; border-left: 7px solid #4d4d4d; border-right: 0; }
.tri-down { width: 0; height: 0; border: 6px solid transparent; border-top-color: #4d4d4d; border-bottom: 0; }
.tri-up { width: 0; height: 0; border: 3px solid transparent; border-bottom-color: #333; border-top: 0; }
.knob { width: 10px; height: 10px; border: 1px solid #888; border-radius: 50%; background: linear-gradient(#ccc, #fff); }

.titlebar { position: relative; z-index: 2; display: flex; align-items: center; flex: none; height: 44px; border-bottom: 1px solid #808080; }
.brand {
  display: flex; align-items: center; align-self: flex-start; gap: 6px; width: 189px; height: 48px; margin-left: 2px; padding-left: 7px;
  border: 1px solid #909090; border-top: 0; background: linear-gradient(135deg, #fff 30%, #d8d8d8); outline: 1px solid #f4f4f4;
}
.brand-mark { width: 36px; height: 36px; flex: none; margin-bottom: 6px; }
.brand-name { display: flex; align-items: baseline; color: #d9261c; font-style: italic; font-size: 21px; padding-top: 6px; }
.brand-name b { font-weight: 800; }
.brand-name span { font-weight: 300; }
.flyout { display: flex; align-items: center; width: 22px; height: 43px; padding-left: 7px; border-right: 2px solid #909090; }
.iconbar { display: flex; align-items: center; }
.quick { margin-left: 28px; padding-bottom: 2px; }
.ib { display: flex; align-items: center; justify-content: center; width: 38px; height: 40px; flex: none; }
.cb { display: flex; align-items: center; justify-content: center; width: 15px; height: 40px; flex: none; }
.soft .caret { border-top-color: #a3a3a3; }
.doc { flex: 1; margin: 0; padding-top: 2px; font-size: 16px; font-weight: 400; text-align: center; }
.search { display: flex; align-items: center; width: 303px; height: 35px; flex: none; padding: 0 4px 0 7px; margin-bottom: 2px; border: 1px solid #000; background: #ebecf1; }
.search .prompt { width: 20px; height: 20px; }
.search input { flex: 1; min-width: 0; height: 30px; padding: 0 0 2px 14px; border: 0; outline: 0; background: none; font: inherit; font-size: 15px; color: #666; }
.search .caret { margin-left: 7px; }
.winctl { display: flex; align-items: center; margin: 0 -10px 3px 4px; }
.winctl .help { width: 36px; }

.ribbon { display: flex; flex: none; height: 122px; padding-top: 6px; }
.group { display: grid; height: 114px; border-right: 1px solid #c4c4c4; }
.g-boss { grid-template-columns: 83px 86px 206px; }
.g-cut { grid-template-columns: 80px 62px 77px 157px; }
.g-feat { grid-template-columns: 46px 64px 88px 118px; }
.g-ref { grid-template-columns: 86px 62px; }
.big-btn { display: flex; flex-direction: column; align-items: center; gap: 4px; padding-top: 13px; white-space: pre; text-align: center; min-width: 0; }
.big-btn.drop { padding: 6px 0 9px; }
.big-btn .caret { margin-top: auto; }
.list { display: flex; flex-direction: column; }
.row-btn { display: flex; align-items: center; gap: 9px; height: 38px; padding-left: 4px; }
.big-btn.instant { width: 84px; height: 114px; margin-left: 1px; padding-top: 12px; border: 1px solid #666; background: #b1b1b1; }

.tabrow { display: flex; align-items: flex-start; flex: none; height: 34px; position: relative; z-index: 1; }
.cmdtabs { display: flex; flex: none; height: 34px; font-size: 17px; }
.cmdtabs button { border: 1px solid #808080; border-left: 0; background: #d3d3d3; color: #222; height: 34px; padding-top: 2px; }
.cmdtabs .on { border-top-color: transparent; border-bottom-color: transparent; background: #f7f7f7; font-weight: 700; }
.cmdtabs .t-feat { width: 83px; padding-left: 1px; text-align: left; font-size: 16px; }
.t-sketch { width: 71px; }
.t-markup { width: 81px; }
.t-eval { width: 87px; }
.t-dim { width: 160px; }
.t-add { width: 202px; }
.t-mbd { width: 57px; }
.hudrow { display: flex; justify-content: space-between; flex: 1; height: 34px; border-top: 1px solid #808080; background: #fff; }
.hud { height: 42px; margin-left: 120px; }
.docctl { height: 42px; margin-right: -3px; }

.body { display: flex; flex: 1; min-height: 0; }
.rail { width: 61px; flex: none; padding-top: 3px; }
.rail-in { width: 59px; padding: 8px 0 7px; border-top: 2px dotted #909090; border-bottom: 1px solid #808080; }
.rail-row { display: flex; align-items: center; justify-content: space-between; height: 38px; padding-right: 4px; }
.work { display: flex; flex-direction: column; flex: 1; min-width: 0; }
.upper { display: flex; flex: 1; min-height: 0; }

.panel { display: flex; flex-direction: column; width: 271px; flex: none; padding: 3px 2px 1px 0; border-left: 1px solid #c4c4c4; border-right: 1px solid #808080; font-size: 17px; }
.grip { display: flex; align-items: center; justify-content: center; height: 27px; padding-right: 2px; border-top: 1px solid #c4c4c4; border-bottom: 1px solid #c4c4c4; flex: none; }
.ptabs { display: flex; margin: 4px 0 0 1px; flex: none; border-bottom: 1px solid #c4c4c4; }
.ptabs button { display: flex; align-items: center; justify-content: center; width: 52px; height: 37px; border: 1px solid #808080; border-left: 0; background: #d3d3d3; }
.ptabs .on { background: #f7f7f7; border-bottom-color: transparent; }
.filter { display: flex; align-items: center; height: 38px; flex: none; margin: 0 3px 0 4px; padding-left: 4px; border: 1px solid #c4c4c4; }
.tree { list-style: none; margin: 0; padding: 1px 0 0; overflow: hidden; flex: none; }
.tree li { display: flex; align-items: center; height: 32px; padding-left: 9px; white-space: nowrap; }
.tree li > .ic { margin-right: 6px; }
.tree .root { padding-left: 6px; }
.tree .root > .ic { margin-right: 4px; }
.exp { display: flex; justify-content: center; width: 16px; margin-right: 14px; flex: none; }
.tree .child { padding-left: 45px; }
.tree .child > .ic { margin-right: 5px; }
.rollback { height: 5px; flex: none; background: #2f8ac6; border-bottom: 1px solid #1a1a9a; }
.hscroll { height: 26px; margin-top: auto; margin-bottom: 3px; padding: 10px 26px; background: #f0f0f0; flex: none; }
.hscroll i { display: block; width: 148px; height: 5px; border-radius: 3px; background: #858585; }

.viewport { position: relative; flex: 1; min-width: 0; background: #fff; overflow: hidden; }
.handle { position: absolute; left: -1px; top: 380px; display: flex; align-items: center; width: 14px; height: 59px; border: 1px solid #808080; border-left: 0; background: #f7f7f7; }
.vase { position: absolute; left: 548px; top: 230px; width: 330px; height: 460px; overflow: visible; }
.triad { position: absolute; left: 5px; top: 726px; width: 64px; height: 72px; overflow: visible; }
.triad text { font: 300 16px "Open Sans", sans-serif; }
.taskpane { position: absolute; right: 0; top: 43px; width: 30px; overflow: hidden; border-left: 1px solid #808080; border-top: 1px solid #808080; }
.taskpane button { display: flex; align-items: center; width: 30px; height: 36px; padding-left: 5px; border-bottom: 1px solid #808080; background: #d3d3d3; }
.taskpane .on { background: #f7f7f7; }

.sheets { display: flex; height: 25px; flex: none; border-top: 1px solid #808080; }
.pager { display: flex; width: 98px; background: #a5a8bd; }
.pager button { width: 24px; height: 24px; border: 1px solid #80809a; }
.pager svg { display: block; width: 22px; height: 22px; }
.sheet-tabs { display: flex; font-size: 18px; }
.sheet-tabs button { height: 24px; border-right: 1px solid #808080; background: #d3d3d3; }
.sheet-tabs .on { background: #f7f7f7; font-weight: 700; }
.s-model { width: 89px; }
.s-views { width: 103px; }
.sheet-tabs .s-motion { width: 171px; padding-right: 10px; }

.status { display: flex; align-items: flex-start; height: 22px; flex: none; overflow: hidden; padding-top: 4px; border-top: 1px solid #808080; white-space: nowrap; font-size: 17px; }
.product { margin-left: -7px; margin-top: 1px; flex: 1; }
.mode { width: 119px; margin-top: 1px; }
.rebuild { width: 32px; margin-right: 81px; }
.units { width: 78px; margin-top: 1px; }
.tri-up { margin: 10px 31px 0 0; }
.status > .ic:last-child { margin-right: 23px; }
</style>
